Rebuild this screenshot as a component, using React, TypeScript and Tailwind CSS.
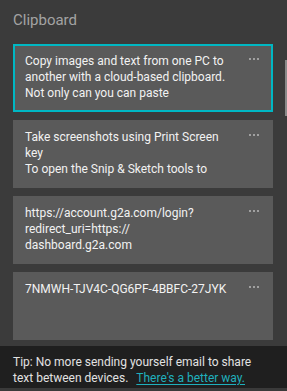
import React from 'react';

type Clip = { lines: string[]; selected?: boolean };

const clips: Clip[] = [
  {
    lines: ['Copy images and text from one PC to', 'another with a cloud-based clipboard.', 'Not only can you can paste'],
    selected: true,
  },
  { lines: ['Take screenshots using Print Screen', 'key', 'To open the Snip & Sketch tools to'] },
  { lines: ['https://account.g2a.com/login?', 'redirect_uri=https://', 'dashboard.g2a.com'] },
  { lines: ['7NMWH-TJV4C-QG6PF-4BBFC-27JYK'] },
];

const Dots = () => (
  <div className="flex gap-[2px] pt-[5px]">
    <span className="w-[2px] h-[2px] bg-[#a0a0a0]" />
    <span className="w-[2px] h-[2px] bg-[#a0a0a0]" />
    <span className="w-[2px] h-[2px] bg-[#a0a0a0]" />
  </div>
);

const ClipCard: React.FC<{ clip: Clip }> = ({ clip }) => (
  <div
    className={`h-[68px] flex justify-between border-2 pl-[10px] pr-[12px] pt-[7px] bg-[#5a5a5a] ${
      clip.selected ? 'border-[#00b7c3]' : 'border-[#5a5a5a]'
    }`}
  >
    <div className="text-[12px] leading-[16px] text-[#f2f2f2]">
      {clip.lines.map((l, i) => (
        <div key={i} className="whitespace-nowrap">{l}</div>
      ))}
    </div>
    <Dots />
  </div>
);

export default function App() {
  return (
    <div
      className="relative w-[287px] h-[391px] bg-[#3b3b3b] flex flex-col overflow-hidden"
      style={{ fontFamily: 'Roboto, "Liberation Sans", sans-serif' }}
    >
      <div className="px-[13px] pt-[10px] h-[44px] text-[15px] leading-[20px] text-[#a3a3a3]">Clipboard</div>
      <div className="flex flex-col gap-[8px] pl-[13px] pr-[14px]">
        {clips.map((c, i) => (
          <ClipCard key={i} clip={c} />
        ))}
      </div>
      <div className="mt-[6px] h-[42px] bg-[#1f1f1f] px-[13px] pt-[8px] text-[12px] leading-[16px] text-[#e2e2e2]">
        <div className="whitespace-nowrap">Tip: No more sending yourself email to share</div>
        <div className="whitespace-nowrap">
          text between devices.
          <span className="ml-[8px] text-[#1fb0bd] underline underline-offset-2">There's a better way.</span>
        </div>
      </div>
      <div className="flex-1 bg-[#3a3a3a]" />
      <div className="absolute right-0 top-[60px] w-[2px] h-[56px] bg-[#8a8a8a]" />
    </div>
  );
}
